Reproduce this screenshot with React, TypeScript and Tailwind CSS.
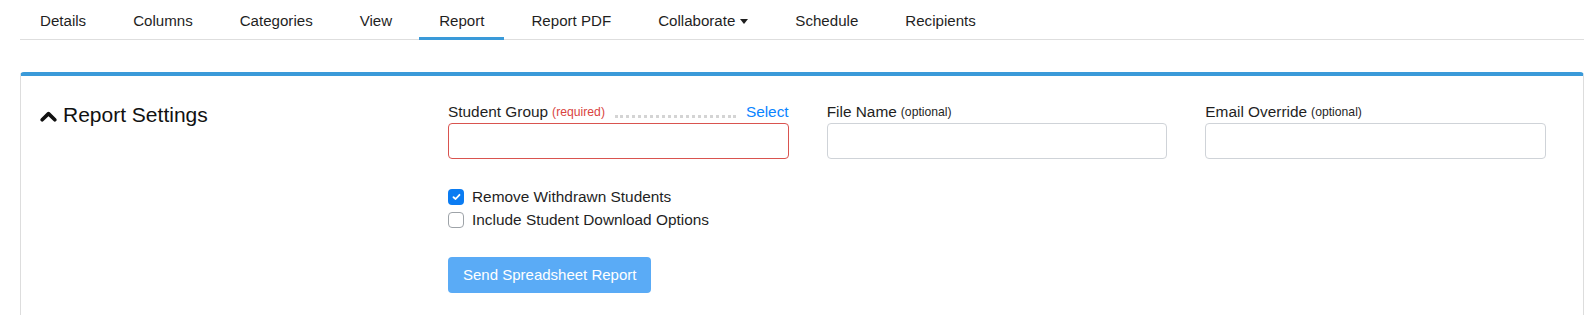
import React from "react";

/** Tabs */
const TABS=["Details","Columns","Categories","View","Report","Report PDF","Collaborate","Schedule","Recipients"] as const;
const ACTIVE="Report";

const Tab=({label}:{label:string})=>{
  const on=label===ACTIVE;
  return (
    <li className={`-mb-px flex h-[40px] items-center border-b-[3px] px-[20px] pt-[5px] text-[15.1px] leading-[20px] text-[#1f1f1f] ${on?"border-[#3a9ad9]":"border-transparent"}`}>
      {label}
      {label==="Collaborate"&&<span className="ml-[5px] mt-[1px] inline-block h-0 w-0 border-x-[4.5px] border-t-[5px] border-x-transparent border-t-[#1f1f1f]"/>}
    </li>
  );
};

const Chevron=()=> (
  <svg width="17" height="11" viewBox="0 0 17 11" className="mr-[6px] mt-[2px]">
    <polyline points="2.2,8.8 8.5,2.6 14.8,8.8" fill="none" stroke="#111" strokeWidth="3.6" strokeLinecap="round" strokeLinejoin="round"/>
  </svg>
);

const Check=({on,label}:{on:boolean;label:string})=>(
  <label className="flex h-[23px] items-center text-[15.4px] text-[#1f1f1f]">
    {on
      ? <span className="mr-[8px] flex h-[16px] w-[16px] items-center justify-center rounded-[4px] bg-[#0b7cf2]">
          <svg width="9" height="8" viewBox="0 0 9 8"><polyline points="1.5,4.2 3.6,6 7.5,1.8" fill="none" stroke="#fff" strokeWidth="1.8" strokeLinecap="round" strokeLinejoin="round"/></svg>
        </span>
      : <span className="mr-[8px] h-[16px] w-[16px] rounded-[4px] border border-[#9ea3a8] bg-white"/>}
    {label}
  </label>
);

const Field=({title,note,red,select}:{title:string;note:string;red?:boolean;select?:boolean})=>(
  <div>
    <div className="mb-[1px] flex h-[20px] items-end leading-[20px]">
      <span className="text-[15.4px] text-[#1f1f1f]">{title}</span>
      <span className={`ml-[4px] text-[12.2px] ${red?"text-[#d9443f]":"text-[#1f1f1f]"}`}>{note}</span>
      {select&&<>
        <span className="mx-[10px] mb-[4px] flex-1 border-b-[3px] border-dotted border-[#d4d4d4]"/>
        <span className="text-[15.4px] text-[#0a84ff]">Select</span>
      </>}
    </div>
    <div className={`h-[36px] rounded-[4px] border bg-white ${red?"border-[#d9534f]":"border-[#cfd3d8]"}`}/>
  </div>
);

export default function App(){
  return (
    <div className="ml-[20px] mr-[8px] bg-white font-['Liberation_Sans',Arial,sans-serif]">
      <ul className="flex gap-[7px] border-b border-[#dedede]">
        {TABS.map(t=><Tab key={t} label={t}/>)}
      </ul>

      <section className="mt-[32px] flex h-[243px] rounded-t-[4px] border-x border-t-4 border-x-[#dddddd] border-t-[#3a9ad9] pt-[25px]">
        <div className="w-[427px] pl-[19px]">
          <h2 className="flex items-center text-[21px] leading-[28px] text-[#111]"><Chevron/>Report Settings</h2>
        </div>
        <div className="flex-1 pr-[37px] pt-[1px]">
          <div className="grid grid-cols-3 gap-x-[38px]">
            <Field title="Student Group" note="(required)" red select/>
            <Field title="File Name" note="(optional)"/>
            <Field title="Email Override" note="(optional)"/>
          </div>
          <div className="mt-[26px]">
            <Check on label="Remove Withdrawn Students"/>
            <Check on={false} label="Include Student Download Options"/>
          </div>
          <button className="mt-[26px] h-[36px] rounded-[4px] bg-[#5aabf6] px-[15px] text-[15px] text-white">Send Spreadsheet Report</button>
        </div>
      </section>
    </div>
  );
}
